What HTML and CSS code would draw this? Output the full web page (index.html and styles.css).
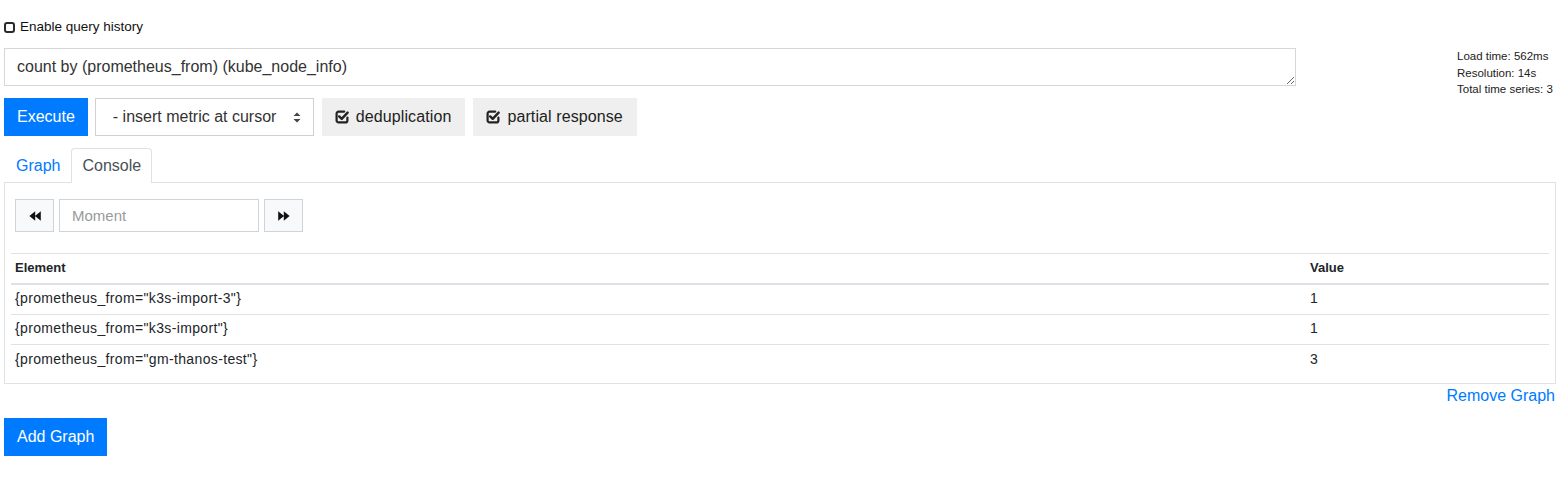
FILE: index.html
```html
<!DOCTYPE html>
<html>
<head>
<meta charset="utf-8">
<link rel="stylesheet" href="styles.css">
</head>
<body>
<div class="page">
  <div class="history">
    <input type="checkbox" class="cb" id="hist">
    <label for="hist">Enable query history</label>
  </div>

  <div class="query-row">
    <div class="query-main">
      <textarea class="expr" rows="1">count by (prometheus_from) (kube_node_info)</textarea>
      <div class="actions">
        <button class="btn btn-primary">Execute</button>
        <div class="select">
          <span>- insert metric at cursor</span>
          <svg class="updown" width="8" height="11" viewBox="0 0 8 11"><path d="M4 0.5 L7.5 4 L0.5 4 Z M4 10.5 L7.5 7 L0.5 7 Z" fill="#444"/></svg>
        </div>
        <button class="btn btn-toggle">
          <svg class="chk" width="14" height="14" viewBox="0 0 14 14"><path d="M9.2 1.6 H3.6 A2 2 0 0 0 1.6 3.6 V10.4 A2 2 0 0 0 3.6 12.4 H10.4 A2 2 0 0 0 12.4 10.4 V7.6" fill="none" stroke="#222" stroke-width="2.2" stroke-linecap="round"/><path d="M4.2 6.4 L6.7 8.8 L12.6 2.6" fill="none" stroke="#222" stroke-width="2.4" stroke-linecap="round" stroke-linejoin="round"/></svg>
          <span>deduplication</span>
        </button>
        <button class="btn btn-toggle">
          <svg class="chk" width="14" height="14" viewBox="0 0 14 14"><path d="M9.2 1.6 H3.6 A2 2 0 0 0 1.6 3.6 V10.4 A2 2 0 0 0 3.6 12.4 H10.4 A2 2 0 0 0 12.4 10.4 V7.6" fill="none" stroke="#222" stroke-width="2.2" stroke-linecap="round"/><path d="M4.2 6.4 L6.7 8.8 L12.6 2.6" fill="none" stroke="#222" stroke-width="2.4" stroke-linecap="round" stroke-linejoin="round"/></svg>
          <span>partial response</span>
        </button>
      </div>
    </div>
    <div class="stats">
      <div>Load time: 562ms</div>
      <div>Resolution: 14s</div>
      <div>Total time series: 3</div>
    </div>
  </div>

  <div class="tabs">
    <a class="tab">Graph</a>
    <a class="tab active">Console</a>
  </div>

  <div class="panel">
    <div class="moment">
      <button class="nav-btn">
        <svg width="12" height="10" viewBox="0 0 12 10"><path d="M6.2 0.3 L0.4 5 L6.2 9.7 Z M11.8 0.3 L6 5 L11.8 9.7 Z" fill="#111"/></svg>
      </button>
      <input class="moment-input" type="text" placeholder="Moment">
      <button class="nav-btn">
        <svg width="12" height="10" viewBox="0 0 12 10"><path d="M0.2 0.3 L6 5 L0.2 9.7 Z M5.8 0.3 L11.6 5 L5.8 9.7 Z" fill="#111"/></svg>
      </button>
    </div>
    <div class="table-wrap">
      <table class="results">
        <thead>
          <tr><th>Element</th><th class="val">Value</th></tr>
        </thead>
        <tbody>
          <tr><td>{prometheus_from="k3s-import-3"}</td><td>1</td></tr>
          <tr><td>{prometheus_from="k3s-import"}</td><td>1</td></tr>
          <tr><td>{prometheus_from="gm-thanos-test"}</td><td>3</td></tr>
        </tbody>
      </table>
    </div>
  </div>

  <div class="remove-row"><a class="link">Remove Graph</a></div>

  <button class="btn btn-primary">Add Graph</button>
</div>
</body>
</html>
```

FILE: styles.css
```css
* { box-sizing: border-box; }
html, body { margin: 0; padding: 0; background: #fff; }
body {
  font-family: "Liberation Sans", Arial, sans-serif;
  color: #212529;
  font-size: 16px;
  line-height: 1.5;
}
.page {
  padding: 17px 12px 20px 4px;
}

.history {
  display: flex;
  align-items: center;
  height: 20px;
  margin-bottom: 11px;
  font-size: 13.5px;
}
.cb {
  -webkit-appearance: none;
  appearance: none;
  width: 11px;
  height: 11px;
  margin: 0 5px 0 0;
  border: 2px solid #2a2a2a;
  border-radius: 3px;
  background: #fff;
}
.history label { color: #111; }

.query-row {
  display: flex;
  justify-content: space-between;
  align-items: flex-start;
}
.query-main { width: 1292px; }
.expr {
  display: block;
  width: 100%;
  height: 38px;
  padding: 6px 12px;
  font-family: inherit;
  font-size: 16px;
  line-height: 24px;
  color: #333;
  border: 1px solid #d6d6d6;
  border-radius: 0;
  resize: vertical;
  overflow: hidden;
}
.actions {
  display: flex;
  gap: 8px;
  margin-top: 12px;
}
.btn {
  font-family: inherit;
  font-size: 16px;
  line-height: 24px;
  height: 38px;
  padding: 6px 12px;
  border: 1px solid transparent;
  border-radius: 0;
  display: inline-flex;
  align-items: center;
}
.btn-primary {
  background: #007bff;
  border-color: #007bff;
  color: #fff;
}
.select {
  width: 219px;
  height: 38px;
  margin-left: -1px;
  border: 1px solid #d0d0d0;
  display: flex;
  align-items: center;
  justify-content: space-between;
  padding: 0 12px 0 17px;
  color: #333;
  font-size: 16px;
}
.updown { display: block; }
.btn-toggle {
  background: #efefef;
  border-color: #efefef;
  color: #222;
  padding: 6px 13px 6px 12px;
  gap: 7px;
}
.btn-toggle span { letter-spacing: 0.1px; }
.chk { display: block; }

.stats {
  width: 99px;
  white-space: nowrap;
  font-size: 11.5px;
  line-height: 16.5px;
  color: #222;
}

.tabs {
  display: flex;
  margin-top: 12px;
  padding-left: 1px;
}
.tab {
  display: block;
  padding: 5px 10px 4px;
  line-height: 24px;
  font-size: 16px;
  color: #007bff;
  border: 1px solid transparent;
  border-bottom: none;
  border-radius: 4px 4px 0 0;
}
.tab.active {
  color: #495057;
  border-color: #dee2e6;
  background: #fff;
  margin-bottom: -1px;
  position: relative;
  padding-bottom: 5px;
}

.panel {
  border: 1px solid #dee2e6;
  padding: 16px 10px 9px;
}
.moment {
  display: flex;
  align-items: center;
}
.nav-btn {
  width: 39px;
  height: 33px;
  background: #f8f9fa;
  border: 1px solid #ced4da;
  border-radius: 0;
  display: flex;
  align-items: center;
  justify-content: center;
  padding: 0;
}
.moment-input {
  width: 200px;
  height: 33px;
  margin: 0 5px;
  border: 1px solid #ced4da;
  border-radius: 0;
  padding: 0 12px;
  font-family: inherit;
  font-size: 15px;
}
.moment-input::placeholder { color: #9a9a9a; }

.table-wrap {
  margin: 21px -4px 0;
}
.results {
  width: 100%;
  border-collapse: collapse;
  font-size: 14px;
  line-height: 19.5px;
  color: #212529;
}
.results th, .results td {
  text-align: left;
  padding: 4.8px 4px;
  border-top: 1px solid #dee2e6;
}
.results td { letter-spacing: 0.35px; }
.results thead th {
  border-bottom: 2px solid #dee2e6;
  font-weight: bold;
  font-size: 13px;
  padding: 4.3px 4px 4.8px;
}
.results .val { width: 243px; }

.remove-row {
  display: flex;
  justify-content: flex-end;
  padding-right: 1px;
  margin-bottom: 10px;
}
.link {
  color: #007bff;
  font-size: 16px;
  line-height: 24px;
}
```
